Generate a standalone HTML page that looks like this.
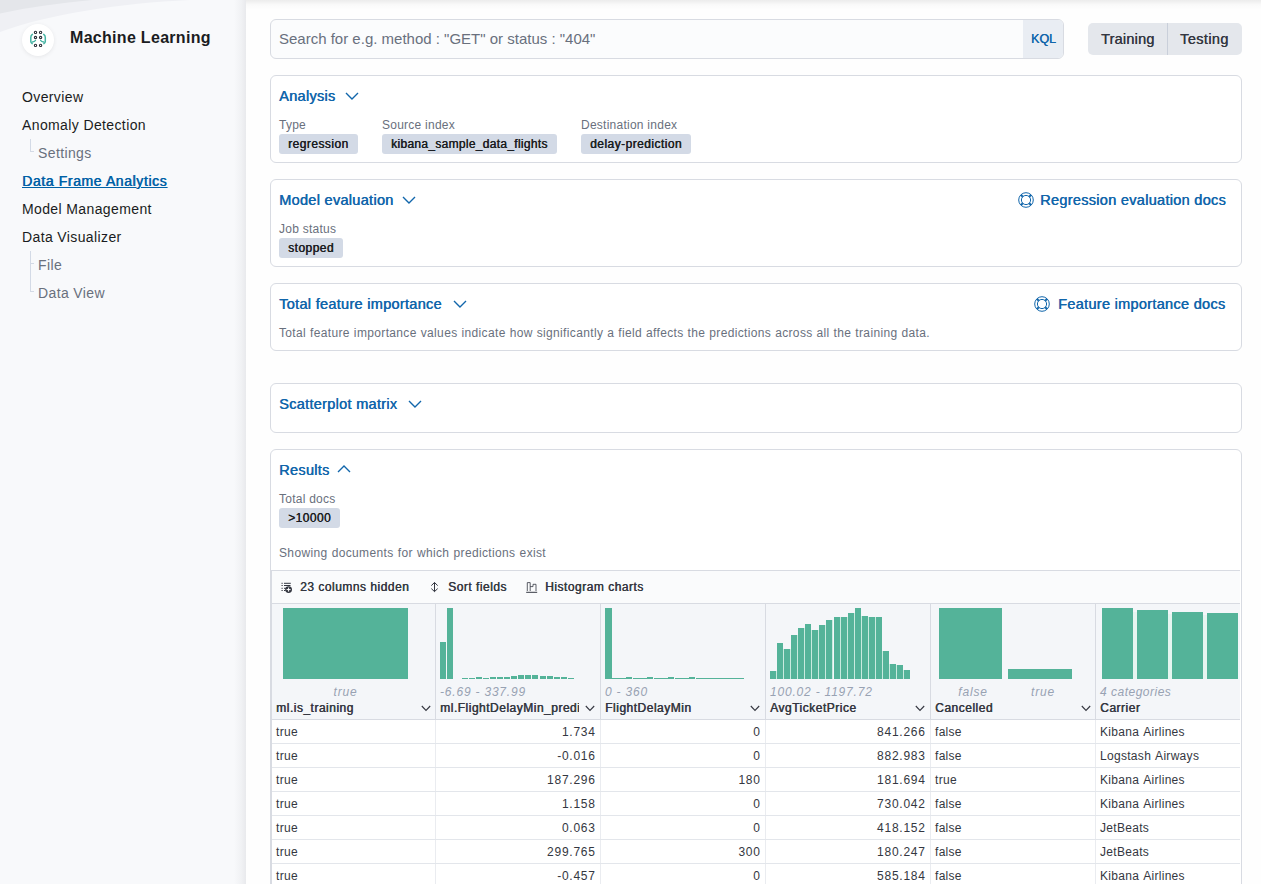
<!DOCTYPE html>
<html><head><meta charset="utf-8">
<style>
*{box-sizing:border-box;margin:0;padding:0}
html,body{width:1261px;height:884px;overflow:hidden}
body{font-family:"Liberation Sans",sans-serif;background:#fefefe;color:#343741;position:relative}
.abs{position:absolute}
#side{position:absolute;left:0;top:0;width:246px;height:884px;background:#f8f9fb;overflow:hidden}
#side .shade{position:absolute;right:0;top:0;width:12px;height:884px;background:linear-gradient(to right,rgba(0,0,0,0),rgba(40,45,60,0.035) 60%,rgba(40,45,60,0.075))}
.logo{position:absolute;left:22px;top:24px;width:32px;height:32px;border-radius:50%;background:#fff;box-shadow:0 1px 4px rgba(0,0,0,0.08)}
.title{position:absolute;left:70px;top:29px;font-size:16px;font-weight:700;color:#1a1c21;white-space:nowrap;letter-spacing:0.3px}
.nav{position:absolute;font-size:14px;color:#1a1c21;white-space:nowrap;letter-spacing:0.38px}
.nav.sub{color:#69707d}
.nav.sel{color:#0061a6;font-weight:400;text-decoration:underline;letter-spacing:0.6px;text-shadow:0.55px 0 0 #0061a6}
.tree{position:absolute;border-left:1px solid #d3dae6}
.panel{position:absolute;left:270px;width:972px;background:#fff;border:1px solid #d8dbe2;border-radius:6px}
.ptitle{position:absolute;left:8px;font-size:14.5px;font-weight:400;color:#1166ab;white-space:nowrap;letter-spacing:0.3px;text-shadow:0.45px 0 0 #1166ab}
.chev{position:absolute}
.lbl{position:absolute;font-size:12px;color:#69707d;white-space:nowrap;letter-spacing:0.25px}
.badge{position:absolute;height:20px;line-height:20px;background:#d3dae6;border-radius:3px;font-size:12px;font-weight:400;color:#1a1c21;padding:0 9px;white-space:nowrap;letter-spacing:0.45px;text-shadow:0.4px 0 0 #1a1c21}
.link{position:absolute;font-size:14.5px;font-weight:400;color:#1166ab;white-space:nowrap;letter-spacing:0.3px;text-shadow:0.45px 0 0 #1166ab}
.tb{position:absolute;top:580px;font-size:12px;font-weight:400;color:#343741;white-space:nowrap;letter-spacing:0.5px;text-shadow:0.4px 0 0 #343741}
.hl{position:absolute;top:685px;font-size:12px;font-style:italic;color:#98a2b3;white-space:nowrap;letter-spacing:0.8px}
.cn{position:absolute;top:701px;font-size:12px;font-weight:400;color:#343741;white-space:nowrap;letter-spacing:0.5px;text-shadow:0.5px 0 0 #343741}
.cell{position:absolute;font-size:12px;color:#343741;white-space:nowrap;letter-spacing:0.3px;word-spacing:1px}
.cell.r{text-align:right;letter-spacing:0.75px}
</style></head><body>

<div id="side">
  <svg class="abs" style="left:0;top:0" width="246" height="40"><path d="M0 0 H190 C120 3 50 14 0 32 Z" fill="#eff0f4"/><path d="M0 0 H92 C60 3 30 7 0 13.5 Z" fill="#e4e6ea"/></svg>
  <div class="shade"></div>
  <div class="logo">
    <svg width="32" height="32" viewBox="0 0 32 32" style="position:absolute;left:0;top:0">
      <g fill="none" stroke="#2b2f38" stroke-width="1.1">
        <circle cx="13.5" cy="8.4" r="1.15"/><circle cx="18.6" cy="8.4" r="1.15"/>
        <circle cx="13.5" cy="13.5" r="1.15"/><circle cx="18.6" cy="13.5" r="1.15"/>
        <circle cx="13.5" cy="21.4" r="1.15"/><circle cx="18.6" cy="21.4" r="1.15"/>
      </g>
      <g fill="none" stroke="#45b3a3" stroke-width="1.5" stroke-linecap="round">
        <path d="M10.4 10.4 Q8.8 11.5 8.8 13.5 V17.5 Q8.8 18.8 10.2 19.6"/>
        <path d="M13.4 16.5 Q12.6 17.9 10.4 18"/>
        <path d="M21.7 10.4 Q23.3 11.5 23.3 13.5 V17.5 Q23.3 18.8 21.9 19.6"/>
        <path d="M18.7 16.5 Q19.5 17.9 21.7 18"/>
      </g>
    </svg>
  </div>
  <div class="title">Machine Learning</div>
  <div class="nav" style="left:22px;top:89px">Overview</div>
  <div class="nav" style="left:22px;top:117px">Anomaly Detection</div>
  <div class="tree" style="left:30px;top:139px;width:4px;height:13px;border-bottom:1px solid #d3dae6"></div>
  <div class="nav sub" style="left:38px;top:145px">Settings</div>
  <div class="nav sel" style="left:22px;top:173px">Data Frame Analytics</div>
  <div class="nav" style="left:22px;top:201px">Model Management</div>
  <div class="nav" style="left:22px;top:229px">Data Visualizer</div>
  <div class="tree" style="left:30px;top:251px;width:4px;height:41px;border-bottom:1px solid #d3dae6"></div>
  <div class="abs" style="left:31px;top:263px;width:3px;height:1px;background:#d3dae6"></div>
  <div class="nav sub" style="left:38px;top:257px">File</div>
  <div class="nav sub" style="left:38px;top:285px">Data View</div>
</div>

<!-- top shadow of main -->
<div class="abs" style="left:246px;top:0;width:1015px;height:10px;background:linear-gradient(to bottom,rgba(0,0,0,0.07),rgba(0,0,0,0.015) 50%,rgba(0,0,0,0))"></div>

<!-- search bar -->
<div class="abs" style="left:270px;top:19px;width:794px;height:40px;border:1px solid #d8dbe2;border-radius:6px;background:#fbfcfd;overflow:hidden">
  <div class="abs" style="left:8px;top:10px;font-size:15px;color:#69707d;white-space:nowrap">Search for e.g. method : "GET" or status : "404"</div>
  <div class="abs" style="left:752px;top:0;width:41px;height:38px;background:#e9edf3"></div>
  <div class="abs" style="left:760px;top:12px;font-size:12.5px;font-weight:400;color:#1166ab;text-shadow:0.3px 0 0 #1166ab">KQL</div>
</div>
<div class="abs" style="left:1088px;top:23px;width:154px;height:32px;background:#e4e7ec;border-radius:5px"></div>
<div class="abs" style="left:1167px;top:23px;width:1px;height:32px;background:#c9cfda"></div>
<div class="abs" style="left:1101px;top:31px;font-size:14.5px;color:#343741;letter-spacing:0.2px;text-shadow:0.3px 0 0 #343741">Training</div>
<div class="abs" style="left:1180px;top:31px;font-size:14.5px;color:#343741;letter-spacing:0.4px;text-shadow:0.3px 0 0 #343741">Testing</div>

<!-- Analysis panel -->
<div class="panel" style="top:75px;height:88px">
  <div class="ptitle" style="top:12px">Analysis</div>
  <svg class="chev" style="left:74px;top:16px" width="14" height="8"><path d="M1 1 L7 7 L13 1" fill="none" stroke="#1166ab" stroke-width="1.4"/></svg>
  <div class="lbl" style="left:8px;top:42px">Type</div>
  <div class="badge" style="left:8px;top:58px">regression</div>
  <div class="lbl" style="left:111px;top:42px">Source index</div>
  <div class="badge" style="left:111px;top:58px;letter-spacing:0.3px">kibana_sample_data_flights</div>
  <div class="lbl" style="left:310px;top:42px">Destination index</div>
  <div class="badge" style="left:310px;top:58px">delay-prediction</div>
</div>

<!-- Model evaluation -->
<div class="panel" style="top:179px;height:88px">
  <div class="ptitle" style="top:12px">Model evaluation</div>
  <svg class="chev" style="left:131px;top:16px" width="14" height="8"><path d="M1 1 L7 7 L13 1" fill="none" stroke="#1166ab" stroke-width="1.4"/></svg>
  <div class="lbl" style="left:8px;top:42px">Job status</div>
  <div class="badge" style="left:8px;top:58px">stopped</div>
</div>

<!-- Total feature importance -->
<div class="panel" style="top:283px;height:68px">
  <div class="ptitle" style="top:12px">Total feature importance</div>
  <svg class="chev" style="left:182px;top:16px" width="14" height="8"><path d="M1 1 L7 7 L13 1" fill="none" stroke="#1166ab" stroke-width="1.4"/></svg>
  <div class="lbl" style="left:8px;top:42px;color:#69707d;letter-spacing:0.35px;word-spacing:0.3px">Total feature importance values indicate how significantly a field affects the predictions across all the training data.</div>
</div>

<!-- Scatterplot -->
<div class="panel" style="top:383px;height:50px">
  <div class="ptitle" style="top:12px">Scatterplot matrix</div>
  <svg class="chev" style="left:137px;top:16px" width="14" height="8"><path d="M1 1 L7 7 L13 1" fill="none" stroke="#1166ab" stroke-width="1.4"/></svg>
</div>

<!-- Results -->
<div class="panel" style="top:449px;height:460px">
  <div class="ptitle" style="top:12px">Results</div>
  <svg class="chev" style="left:66px;top:15px" width="14" height="8"><path d="M1 7 L7 1 L13 7" fill="none" stroke="#1166ab" stroke-width="1.4"/></svg>
  <div class="lbl" style="left:8px;top:42px">Total docs</div>
  <div class="badge" style="left:8px;top:58px;letter-spacing:0.45px">&gt;10000</div>
  <div class="lbl" style="left:8px;top:96px;letter-spacing:0.35px;word-spacing:0.5px">Showing documents for which predictions exist</div>
</div>


<!-- docs links -->
<svg class="abs" style="left:1018px;top:192px" width="16" height="16" viewBox="0 0 16 16"><g fill="none" stroke="#1166ab"><circle cx="8" cy="8" r="7.3" stroke-width="1"/><circle cx="8" cy="8" r="4.6" stroke-width="1"/><path d="M2.9 2.9 L4.8 4.8 M13.1 2.9 L11.2 4.8 M2.9 13.1 L4.8 11.2 M13.1 13.1 L11.2 11.2" stroke-width="2"/></g></svg>
<div class="link" style="left:1040px;top:192px">Regression evaluation docs</div>
<svg class="abs" style="left:1034px;top:296px" width="16" height="16" viewBox="0 0 16 16"><g fill="none" stroke="#1166ab"><circle cx="8" cy="8" r="7.3" stroke-width="1"/><circle cx="8" cy="8" r="4.6" stroke-width="1"/><path d="M2.9 2.9 L4.8 4.8 M13.1 2.9 L11.2 4.8 M2.9 13.1 L4.8 11.2 M13.1 13.1 L11.2 11.2" stroke-width="2"/></g></svg>
<div class="link" style="left:1058px;top:296px">Feature importance docs</div>

<div class="abs" style="left:271px;top:570px;width:970px;height:314px;border-left:1px solid #d8dbe2"></div>
<div class="abs" style="left:272px;top:570px;width:968px;height:34px;background:#fafbfc;border-top:1px solid #d8dbe2;border-bottom:1px solid #d8dbe2"></div>
<div class="abs" style="left:272px;top:604px;width:968px;height:115px;background:#f4f6f9"></div>
<div class="abs" style="left:272px;top:719px;width:968px;height:1px;background:#d8dbe2"></div>
<div class="abs" style="left:435px;top:604px;width:1px;height:115px;background:#d8dbe2"></div>
<div class="abs" style="left:435px;top:720px;width:1px;height:164px;background:#eaecf0"></div>
<div class="abs" style="left:600px;top:604px;width:1px;height:115px;background:#d8dbe2"></div>
<div class="abs" style="left:600px;top:720px;width:1px;height:164px;background:#eaecf0"></div>
<div class="abs" style="left:765px;top:604px;width:1px;height:115px;background:#d8dbe2"></div>
<div class="abs" style="left:765px;top:720px;width:1px;height:164px;background:#eaecf0"></div>
<div class="abs" style="left:930px;top:604px;width:1px;height:115px;background:#d8dbe2"></div>
<div class="abs" style="left:930px;top:720px;width:1px;height:164px;background:#eaecf0"></div>
<div class="abs" style="left:1095px;top:604px;width:1px;height:115px;background:#d8dbe2"></div>
<div class="abs" style="left:1095px;top:720px;width:1px;height:164px;background:#eaecf0"></div>
<div class="abs" style="left:272px;top:743px;width:968px;height:1px;background:#e3e6eb"></div>
<div class="abs" style="left:272px;top:767px;width:968px;height:1px;background:#e3e6eb"></div>
<div class="abs" style="left:272px;top:791px;width:968px;height:1px;background:#e3e6eb"></div>
<div class="abs" style="left:272px;top:815px;width:968px;height:1px;background:#e3e6eb"></div>
<div class="abs" style="left:272px;top:839px;width:968px;height:1px;background:#e3e6eb"></div>
<div class="abs" style="left:272px;top:863px;width:968px;height:1px;background:#e3e6eb"></div>
<div class="abs" style="left:283.0px;top:608.0px;width:125.0px;height:71.0px;background:#54b399"></div>
<div class="abs" style="left:440.2px;top:642.0px;width:6.0px;height:37.0px;background:#54b399"></div>
<div class="abs" style="left:447.3px;top:608.0px;width:6.0px;height:71.0px;background:#54b399"></div>
<div class="abs" style="left:461.5px;top:678.0px;width:6.0px;height:1.0px;background:#54b399"></div>
<div class="abs" style="left:468.6px;top:678.0px;width:6.0px;height:1.0px;background:#54b399"></div>
<div class="abs" style="left:475.6px;top:677.0px;width:6.0px;height:2.0px;background:#54b399"></div>
<div class="abs" style="left:482.7px;top:677.5px;width:6.0px;height:1.5px;background:#54b399"></div>
<div class="abs" style="left:489.8px;top:677.0px;width:6.0px;height:2.0px;background:#54b399"></div>
<div class="abs" style="left:496.9px;top:677.0px;width:6.0px;height:2.0px;background:#54b399"></div>
<div class="abs" style="left:504.0px;top:677.0px;width:6.0px;height:2.0px;background:#54b399"></div>
<div class="abs" style="left:511.1px;top:676.4px;width:6.0px;height:2.6px;background:#54b399"></div>
<div class="abs" style="left:518.2px;top:675.2px;width:6.0px;height:3.8px;background:#54b399"></div>
<div class="abs" style="left:525.3px;top:675.0px;width:6.0px;height:4.0px;background:#54b399"></div>
<div class="abs" style="left:532.4px;top:675.2px;width:6.0px;height:3.8px;background:#54b399"></div>
<div class="abs" style="left:539.5px;top:675.8px;width:6.0px;height:3.2px;background:#54b399"></div>
<div class="abs" style="left:546.5px;top:676.4px;width:6.0px;height:2.6px;background:#54b399"></div>
<div class="abs" style="left:553.6px;top:677.3px;width:6.0px;height:1.7px;background:#54b399"></div>
<div class="abs" style="left:560.7px;top:677.3px;width:6.0px;height:1.7px;background:#54b399"></div>
<div class="abs" style="left:567.8px;top:677.8px;width:6.0px;height:1.2px;background:#54b399"></div>
<div class="abs" style="left:605.2px;top:608.0px;width:6.7px;height:71.0px;background:#54b399"></div>
<div class="abs" style="left:612.2px;top:678.0px;width:7.0px;height:1.0px;background:#54b399"></div>
<div class="abs" style="left:619.1px;top:678.0px;width:7.0px;height:1.0px;background:#54b399"></div>
<div class="abs" style="left:626.1px;top:677.0px;width:6.0px;height:2.0px;background:#54b399"></div>
<div class="abs" style="left:633.0px;top:678.0px;width:7.0px;height:1.0px;background:#54b399"></div>
<div class="abs" style="left:640.0px;top:678.0px;width:7.0px;height:1.0px;background:#54b399"></div>
<div class="abs" style="left:646.9px;top:677.0px;width:6.0px;height:2.0px;background:#54b399"></div>
<div class="abs" style="left:653.9px;top:678.0px;width:7.0px;height:1.0px;background:#54b399"></div>
<div class="abs" style="left:660.8px;top:678.0px;width:7.0px;height:1.0px;background:#54b399"></div>
<div class="abs" style="left:667.8px;top:677.0px;width:6.0px;height:2.0px;background:#54b399"></div>
<div class="abs" style="left:674.7px;top:678.0px;width:7.0px;height:1.0px;background:#54b399"></div>
<div class="abs" style="left:681.7px;top:678.0px;width:7.0px;height:1.0px;background:#54b399"></div>
<div class="abs" style="left:688.6px;top:677.0px;width:6.0px;height:2.0px;background:#54b399"></div>
<div class="abs" style="left:695.6px;top:678.0px;width:7.0px;height:1.0px;background:#54b399"></div>
<div class="abs" style="left:702.5px;top:678.0px;width:7.0px;height:1.0px;background:#54b399"></div>
<div class="abs" style="left:709.5px;top:678.0px;width:7.0px;height:1.0px;background:#54b399"></div>
<div class="abs" style="left:716.4px;top:678.0px;width:7.0px;height:1.0px;background:#54b399"></div>
<div class="abs" style="left:723.4px;top:678.0px;width:7.0px;height:1.0px;background:#54b399"></div>
<div class="abs" style="left:730.3px;top:678.0px;width:7.0px;height:1.0px;background:#54b399"></div>
<div class="abs" style="left:737.2px;top:678.0px;width:7.0px;height:1.0px;background:#54b399"></div>
<div class="abs" style="left:770.1px;top:671.1px;width:6.0px;height:7.9px;background:#54b399"></div>
<div class="abs" style="left:776.1px;top:671.1px;width:1.0px;height:7.9px;background:#c9eadf"></div>
<div class="abs" style="left:777.1px;top:643.4px;width:6.0px;height:35.6px;background:#54b399"></div>
<div class="abs" style="left:783.1px;top:649.4px;width:1.0px;height:29.6px;background:#c9eadf"></div>
<div class="abs" style="left:784.2px;top:649.4px;width:6.0px;height:29.6px;background:#54b399"></div>
<div class="abs" style="left:790.2px;top:649.4px;width:1.0px;height:29.6px;background:#c9eadf"></div>
<div class="abs" style="left:791.2px;top:634.5px;width:6.0px;height:44.5px;background:#54b399"></div>
<div class="abs" style="left:797.2px;top:634.5px;width:1.0px;height:44.5px;background:#c9eadf"></div>
<div class="abs" style="left:798.3px;top:628.4px;width:6.0px;height:50.6px;background:#54b399"></div>
<div class="abs" style="left:804.3px;top:628.4px;width:1.0px;height:50.6px;background:#c9eadf"></div>
<div class="abs" style="left:805.3px;top:623.6px;width:6.0px;height:55.4px;background:#54b399"></div>
<div class="abs" style="left:811.3px;top:630.4px;width:1.0px;height:48.6px;background:#c9eadf"></div>
<div class="abs" style="left:812.3px;top:630.4px;width:6.0px;height:48.6px;background:#54b399"></div>
<div class="abs" style="left:818.3px;top:630.4px;width:1.0px;height:48.6px;background:#c9eadf"></div>
<div class="abs" style="left:819.4px;top:625.1px;width:6.0px;height:53.9px;background:#54b399"></div>
<div class="abs" style="left:825.4px;top:625.1px;width:1.0px;height:53.9px;background:#c9eadf"></div>
<div class="abs" style="left:826.4px;top:620.2px;width:6.0px;height:58.8px;background:#54b399"></div>
<div class="abs" style="left:832.4px;top:620.2px;width:1.0px;height:58.8px;background:#c9eadf"></div>
<div class="abs" style="left:833.5px;top:616.8px;width:6.0px;height:62.2px;background:#54b399"></div>
<div class="abs" style="left:839.5px;top:616.8px;width:1.0px;height:62.2px;background:#c9eadf"></div>
<div class="abs" style="left:840.5px;top:616.6px;width:6.0px;height:62.4px;background:#54b399"></div>
<div class="abs" style="left:846.5px;top:616.6px;width:1.0px;height:62.4px;background:#c9eadf"></div>
<div class="abs" style="left:847.5px;top:612.5px;width:6.0px;height:66.5px;background:#54b399"></div>
<div class="abs" style="left:853.5px;top:612.5px;width:1.0px;height:66.5px;background:#c9eadf"></div>
<div class="abs" style="left:854.6px;top:608.4px;width:6.0px;height:70.6px;background:#54b399"></div>
<div class="abs" style="left:860.6px;top:616.3px;width:1.0px;height:62.7px;background:#c9eadf"></div>
<div class="abs" style="left:861.6px;top:616.3px;width:6.0px;height:62.7px;background:#54b399"></div>
<div class="abs" style="left:867.6px;top:617.0px;width:1.0px;height:62.0px;background:#c9eadf"></div>
<div class="abs" style="left:868.7px;top:617.0px;width:6.0px;height:62.0px;background:#54b399"></div>
<div class="abs" style="left:874.7px;top:617.0px;width:1.0px;height:62.0px;background:#c9eadf"></div>
<div class="abs" style="left:875.7px;top:616.6px;width:6.0px;height:62.4px;background:#54b399"></div>
<div class="abs" style="left:881.7px;top:650.5px;width:1.0px;height:28.5px;background:#c9eadf"></div>
<div class="abs" style="left:882.7px;top:650.5px;width:6.0px;height:28.5px;background:#54b399"></div>
<div class="abs" style="left:888.7px;top:664.0px;width:1.0px;height:15.0px;background:#c9eadf"></div>
<div class="abs" style="left:889.8px;top:664.0px;width:6.0px;height:15.0px;background:#54b399"></div>
<div class="abs" style="left:895.8px;top:665.4px;width:1.0px;height:13.6px;background:#c9eadf"></div>
<div class="abs" style="left:896.8px;top:665.4px;width:6.0px;height:13.6px;background:#54b399"></div>
<div class="abs" style="left:902.8px;top:670.4px;width:1.0px;height:8.6px;background:#c9eadf"></div>
<div class="abs" style="left:903.9px;top:670.4px;width:6.0px;height:8.6px;background:#54b399"></div>
<div class="abs" style="left:938.6px;top:608.0px;width:63.0px;height:71.0px;background:#54b399"></div>
<div class="abs" style="left:1008.4px;top:669.2px;width:63.2px;height:9.8px;background:#54b399"></div>
<div class="abs" style="left:1133.0px;top:612.2px;width:4.0px;height:66.8px;background:#e6f5f0"></div>
<div class="abs" style="left:1168.0px;top:614.0px;width:4.0px;height:65.0px;background:#e6f5f0"></div>
<div class="abs" style="left:1203.0px;top:615.0px;width:4.1px;height:64.0px;background:#e6f5f0"></div>
<div class="abs" style="left:1101.8px;top:608.0px;width:31.2px;height:71.0px;background:#54b399"></div>
<div class="abs" style="left:1137.0px;top:610.2px;width:31.0px;height:68.8px;background:#54b399"></div>
<div class="abs" style="left:1172.0px;top:612.2px;width:31.0px;height:66.8px;background:#54b399"></div>
<div class="abs" style="left:1207.1px;top:613.3px;width:31.2px;height:65.7px;background:#54b399"></div>


<!-- toolbar text -->
<svg class="abs" style="left:270px;top:570px" width="290" height="34" viewBox="270 570 290 34">
  <g fill="#343741"><rect x="281.5" y="582.8" width="1.2" height="1"/><rect x="281.5" y="585" width="1.2" height="1"/><rect x="281.5" y="587.8" width="1.2" height="1"/><rect x="281.5" y="590" width="1.2" height="1"/>
  <rect x="284" y="582.8" width="6.8" height="1"/><rect x="284" y="585" width="6.5" height="1"/><rect x="284" y="587.8" width="2" height="1"/><rect x="284" y="590" width="1.5" height="1"/></g>
  <circle cx="288.6" cy="589.6" r="3.4" fill="#343741"/><path d="M288.6 587.6 V591.6 M286.6 589.6 H290.6" stroke="#fff" stroke-width="1"/>
  <path d="M434.5 582.5 V591.6 M431.3 585.6 L434.5 582.5 L437.7 585.6 M431.3 588.6 L434.5 591.6 L437.7 588.6" fill="none" stroke="#343741" stroke-width="1"/>
  <path d="M526.2 592.3 H537.2" stroke="#343741" stroke-width="1"/>
  <path d="M527.3 591 V582.6 H530.2 V591 M530.2 586.6 H533 V584.3 H536 V591" fill="none" stroke="#343741" stroke-width="0.8"/>
</svg>
<div class="tb" style="left:300px">23 columns hidden</div>
<div class="tb" style="left:448px">Sort fields</div>
<div class="tb" style="left:545px">Histogram charts</div>

<!-- header labels -->
<div class="hl" style="left:276px;width:139px;text-align:center">true</div>
<div class="hl" style="left:440px">-6.69 - 337.99</div>
<div class="hl" style="left:605px">0 - 360</div>
<div class="hl" style="left:770px">100.02 - 1197.72</div>
<div class="hl" style="left:938px;width:70px;text-align:center">false</div>
<div class="hl" style="left:1008px;width:70px;text-align:center">true</div>
<div class="hl" style="left:1100px;letter-spacing:0.5px">4 categories</div>

<div class="cn" style="left:276px">ml.is_training</div>
<div class="cn" style="left:440px;width:139px;overflow:hidden">ml.FlightDelayMin_prediction</div>
<div class="cn" style="left:605px">FlightDelayMin</div>
<div class="cn" style="left:770px">AvgTicketPrice</div>
<div class="cn" style="left:935px">Cancelled</div>
<div class="cn" style="left:1100px">Carrier</div>
<svg class="abs" style="left:421px;top:705px" width="10" height="7"><path d="M0.8 1 L5 5.5 L9.2 1" fill="none" stroke="#343741" stroke-width="1.1"/></svg>
<svg class="abs" style="left:585px;top:705px" width="10" height="7"><path d="M0.8 1 L5 5.5 L9.2 1" fill="none" stroke="#343741" stroke-width="1.1"/></svg>
<svg class="abs" style="left:750px;top:705px" width="10" height="7"><path d="M0.8 1 L5 5.5 L9.2 1" fill="none" stroke="#343741" stroke-width="1.1"/></svg>
<svg class="abs" style="left:915px;top:705px" width="10" height="7"><path d="M0.8 1 L5 5.5 L9.2 1" fill="none" stroke="#343741" stroke-width="1.1"/></svg>
<svg class="abs" style="left:1081px;top:705px" width="10" height="7"><path d="M0.8 1 L5 5.5 L9.2 1" fill="none" stroke="#343741" stroke-width="1.1"/></svg>

<div class="cell" style="left:276px;top:725px">true</div><div class="cell r" style="left:440px;top:725px;width:155.7px">1.734</div><div class="cell r" style="left:605px;top:725px;width:155.7px">0</div><div class="cell r" style="left:770px;top:725px;width:155.7px">841.266</div><div class="cell" style="left:935px;top:725px">false</div><div class="cell" style="left:1100px;top:725px">Kibana Airlines</div>
<div class="cell" style="left:276px;top:749px">true</div><div class="cell r" style="left:440px;top:749px;width:155.7px">-0.016</div><div class="cell r" style="left:605px;top:749px;width:155.7px">0</div><div class="cell r" style="left:770px;top:749px;width:155.7px">882.983</div><div class="cell" style="left:935px;top:749px">false</div><div class="cell" style="left:1100px;top:749px">Logstash Airways</div>
<div class="cell" style="left:276px;top:773px">true</div><div class="cell r" style="left:440px;top:773px;width:155.7px">187.296</div><div class="cell r" style="left:605px;top:773px;width:155.7px">180</div><div class="cell r" style="left:770px;top:773px;width:155.7px">181.694</div><div class="cell" style="left:935px;top:773px">true</div><div class="cell" style="left:1100px;top:773px">Kibana Airlines</div>
<div class="cell" style="left:276px;top:797px">true</div><div class="cell r" style="left:440px;top:797px;width:155.7px">1.158</div><div class="cell r" style="left:605px;top:797px;width:155.7px">0</div><div class="cell r" style="left:770px;top:797px;width:155.7px">730.042</div><div class="cell" style="left:935px;top:797px">false</div><div class="cell" style="left:1100px;top:797px">Kibana Airlines</div>
<div class="cell" style="left:276px;top:821px">true</div><div class="cell r" style="left:440px;top:821px;width:155.7px">0.063</div><div class="cell r" style="left:605px;top:821px;width:155.7px">0</div><div class="cell r" style="left:770px;top:821px;width:155.7px">418.152</div><div class="cell" style="left:935px;top:821px">false</div><div class="cell" style="left:1100px;top:821px">JetBeats</div>
<div class="cell" style="left:276px;top:845px">true</div><div class="cell r" style="left:440px;top:845px;width:155.7px">299.765</div><div class="cell r" style="left:605px;top:845px;width:155.7px">300</div><div class="cell r" style="left:770px;top:845px;width:155.7px">180.247</div><div class="cell" style="left:935px;top:845px">false</div><div class="cell" style="left:1100px;top:845px">JetBeats</div>
<div class="cell" style="left:276px;top:869px">true</div><div class="cell r" style="left:440px;top:869px;width:155.7px">-0.457</div><div class="cell r" style="left:605px;top:869px;width:155.7px">0</div><div class="cell r" style="left:770px;top:869px;width:155.7px">585.184</div><div class="cell" style="left:935px;top:869px">false</div><div class="cell" style="left:1100px;top:869px">Kibana Airlines</div>

</body></html>
